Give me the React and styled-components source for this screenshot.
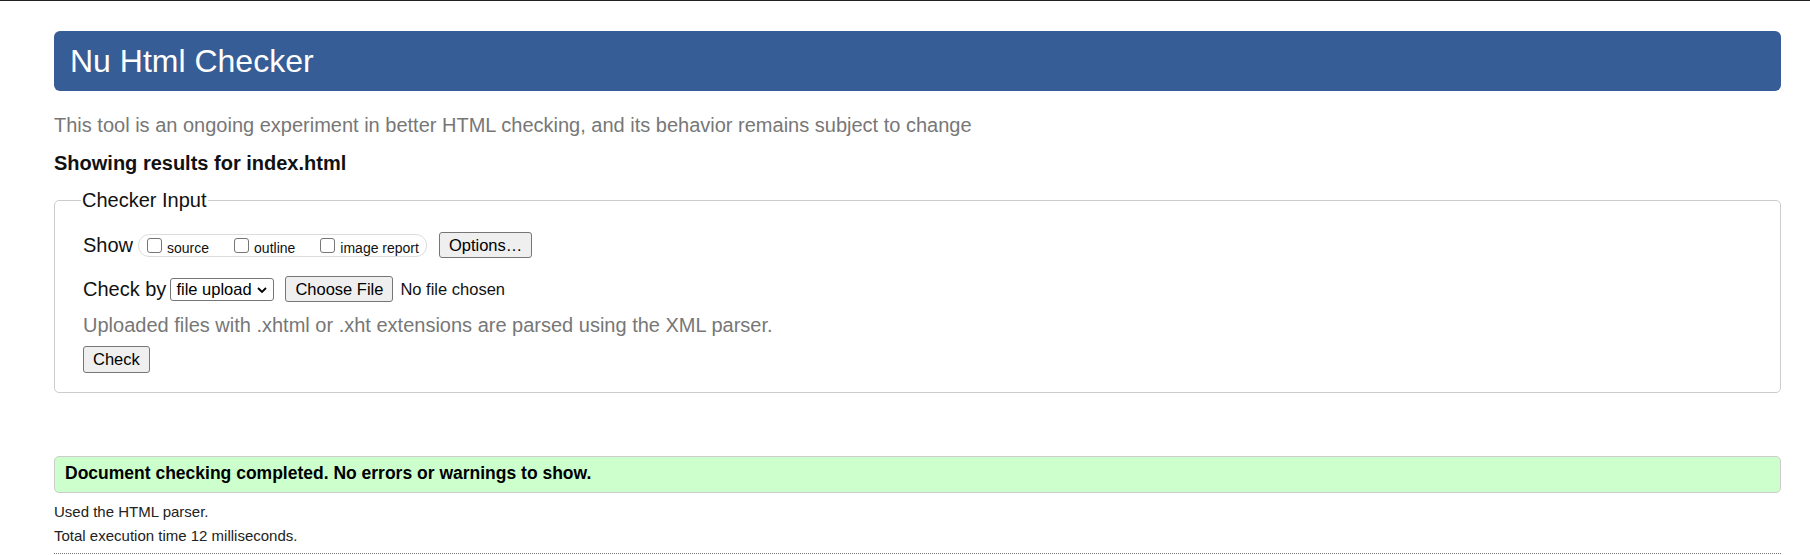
import React from "react";
import styled, { createGlobalStyle } from "styled-components";

const GlobalStyle = createGlobalStyle`
  html, body {
    margin: 0;
    padding: 0;
    background: #ffffff;
  }
  body {
    font-family: "Liberation Sans", Arial, Helvetica, sans-serif;
    color: #111;
    border-top: 1px solid #222;
  }
`;

const Page = styled.main`
  padding: 0 29px 0 54px;
`;

const Title = styled.h1`
  margin: 30px 0 0;
  height: 60px;
  line-height: 60px;
  padding: 0 16px;
  background: #365d95;
  color: #ffffff;
  font-size: 32px;
  font-weight: normal;
  border-radius: 6px;
`;

const About = styled.p`
  margin: 22px 0 0;
  font-size: 20px;
  line-height: 24px;
  color: #777;
`;

const Results = styled.h2`
  margin: 14px 0 0;
  font-size: 20px;
  line-height: 24px;
  font-weight: bold;
  color: #111;
`;

const Fieldset = styled.fieldset`
  margin: 13px 0 0;
  padding: 20px 28px 19px;
  border: 1px solid #ccc;
  border-radius: 5px;
  min-width: 0;
`;

const Legend = styled.legend`
  font-size: 20px;
  line-height: 24px;
  padding: 0 1px;
  margin-left: -2px;
  color: #111;
`;

const Row = styled.div`
  display: flex;
  align-items: center;
  height: 26px;
  margin-top: ${(p) => p.$top || 0}px;
`;

const RowLabel = styled.span`
  font-size: 20px;
  line-height: 26px;
  color: #111;
  margin-right: ${(p) => p.$gap}px;
`;

const Pill = styled.div`
  box-sizing: border-box;
  display: flex;
  align-items: center;
  gap: 25px;
  height: 23px;
  padding: 0 7px 0 8px;
  border: 1px solid #ddd;
  border-radius: 11px;
  margin-right: 12px;
`;

const CheckLabel = styled.label`
  display: flex;
  align-items: center;
  gap: 5px;
  font-size: 14px;
  color: #111;
`;

const CheckText = styled.span`
  line-height: 16px;
  padding-top: 6px;
`;

const Box = styled.input.attrs({ type: "checkbox" })`
  appearance: none;
  -webkit-appearance: none;
  box-sizing: border-box;
  width: 15px;
  height: 15px;
  margin: 0;
  border: 1px solid #767676;
  border-radius: 3px;
  background: #fff;
`;

const Button = styled.button`
  box-sizing: border-box;
  height: ${(p) => p.$h || 26}px;
  padding: 0 9px;
  margin: 0 ${(p) => p.$right || 0}px 0 0;
  font-family: "Liberation Sans", Arial, Helvetica, sans-serif;
  font-size: 16.5px;
  color: #000;
  background: #efefef;
  border: 1px solid #767676;
  border-radius: 3px;
`;

const SelectWrap = styled.span`
  position: relative;
  display: inline-flex;
  margin-right: 11px;
`;

const Select = styled.select`
  appearance: none;
  -webkit-appearance: none;
  box-sizing: border-box;
  width: 104px;
  height: 23px;
  padding: 0 20px 0 5px;
  font-family: "Liberation Sans", Arial, Helvetica, sans-serif;
  font-size: 16.5px;
  color: #000;
  background: #fff;
  border: 1px solid #767676;
  border-radius: 3px;
`;

const Chevron = styled.svg`
  position: absolute;
  right: 7px;
  top: 9px;
  pointer-events: none;
`;

const FileName = styled.span`
  font-size: 16.5px;
  color: #111;
`;

const Hint = styled.p`
  margin: 11px 0 0;
  font-size: 20px;
  line-height: 24px;
  color: #777;
`;

const SubmitRow = styled.div`
  margin-top: 9px;
  display: flex;
`;

const Success = styled.p`
  margin: 63px 0 0;
  padding: 4px 10px 7px;
  font-size: 17.5px;
  line-height: 24px;
  font-weight: bold;
  color: #000;
  background: #ccffcc;
  border: 1px solid #ccc;
  border-radius: 5px;
`;

const Meta = styled.p`
  margin: ${(p) => (p.$first ? 7 : 0)}px 0 0;
  font-size: 15px;
  line-height: 24px;
  color: #222;
`;

const Rule = styled.hr`
  margin: 5px 0 0;
  border: 0;
  border-top: 1px dotted #777;
  height: 0;
`;

export default function App() {
  return (
    <>
      <GlobalStyle />
      <Page>
        <Title>Nu Html Checker</Title>
        <About>
          This tool is an ongoing experiment in better HTML checking, and its
          behavior remains subject to change
        </About>
        <Results>Showing results for index.html</Results>
        <Fieldset>
          <Legend>Checker Input</Legend>
          <Row>
            <RowLabel $gap={5}>Show</RowLabel>
            <Pill>
              <CheckLabel>
                <Box />
                <CheckText>source</CheckText>
              </CheckLabel>
              <CheckLabel>
                <Box />
                <CheckText>outline</CheckText>
              </CheckLabel>
              <CheckLabel>
                <Box />
                <CheckText>image report</CheckText>
              </CheckLabel>
            </Pill>
            <Button>Options…</Button>
          </Row>
          <Row $top={18}>
            <RowLabel $gap={4}>Check by</RowLabel>
            <SelectWrap>
              <Select defaultValue="file">
                <option value="file">file upload</option>
                <option value="address">address</option>
                <option value="text">text input</option>
              </Select>
              <Chevron width="10" height="6" viewBox="0 0 10 6">
                <path
                  d="M1 1 L5 5 L9 1"
                  fill="none"
                  stroke="#000"
                  strokeWidth="1.8"
                />
              </Chevron>
            </SelectWrap>
            <Button $right={7}>Choose File</Button>
            <FileName>No file chosen</FileName>
          </Row>
          <Hint>
            Uploaded files with .xhtml or .xht extensions are parsed using the
            XML parser.
          </Hint>
          <SubmitRow>
            <Button $h={27}>Check</Button>
          </SubmitRow>
        </Fieldset>
        <Success>
          Document checking completed. No errors or warnings to show.
        </Success>
        <Meta $first>Used the HTML parser.</Meta>
        <Meta>Total execution time 12 milliseconds.</Meta>
        <Rule />
      </Page>
    </>
  );
}
